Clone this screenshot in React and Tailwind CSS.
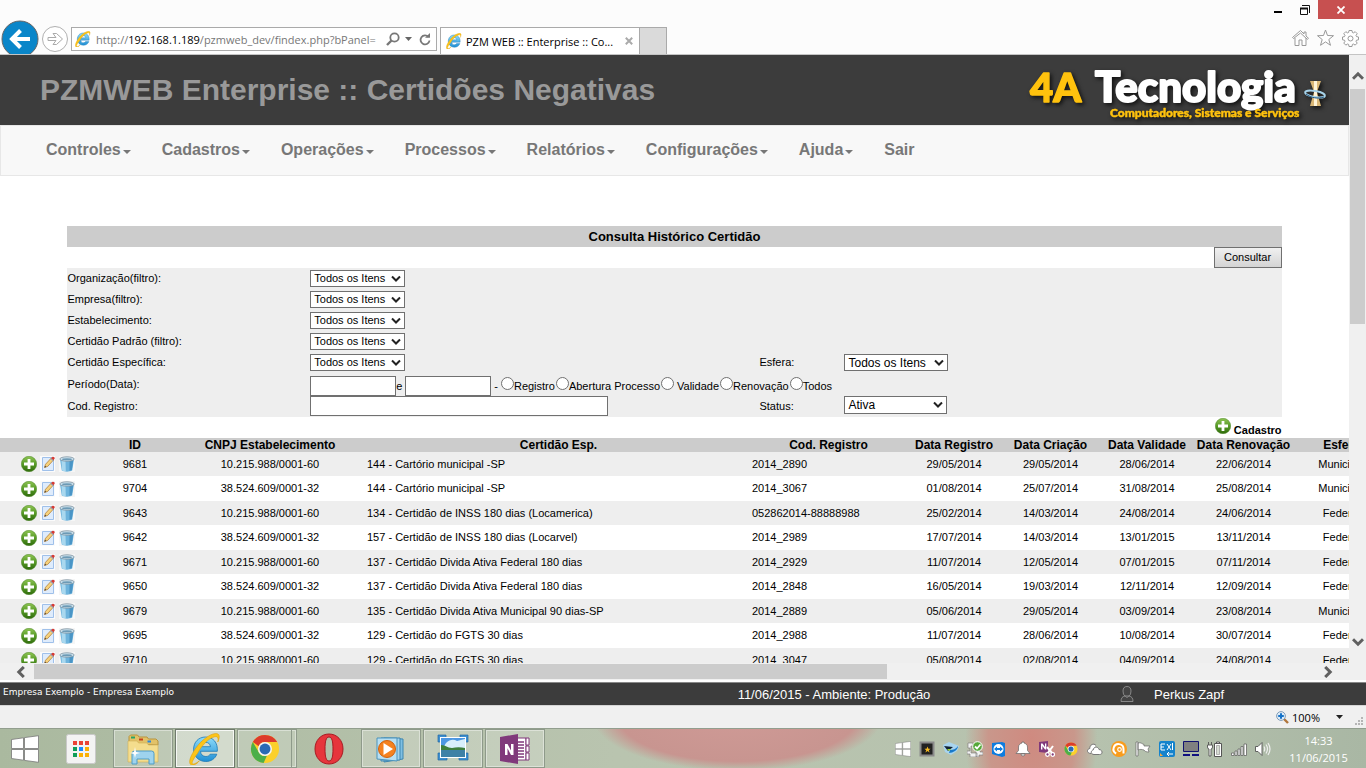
import { useState } from "react";

const filters = [
  { id: "organizacao", label: "Organização(filtro):" },
  { id: "empresa", label: "Empresa(filtro):" },
  { id: "estabelecimento", label: "Estabelecimento:" },
  { id: "certidao-padrao", label: "Certidão Padrão (filtro):" },
];

const periodOptions = ["Registro", "Abertura Processo", "Validade", "Renovação", "Todos"];

const menuItems = [
  "Controles",
  "Cadastros",
  "Operações",
  "Processos",
  "Relatórios",
  "Configurações",
  "Ajuda",
];

const rows = [
  ["9681", "10.215.988/0001-60", "144 - Cartório municipal -SP", "2014_2890", "29/05/2014", "29/05/2014", "28/06/2014", "22/06/2014", "Municipal"],
  ["9704", "38.524.609/0001-32", "144 - Cartório municipal -SP", "2014_3067", "01/08/2014", "25/07/2014", "31/08/2014", "25/08/2014", "Municipal"],
  ["9643", "10.215.988/0001-60", "134 - Certidão de INSS 180 dias (Locamerica)", "052862014-88888988", "25/02/2014", "14/03/2014", "24/08/2014", "24/06/2014", "Federal"],
  ["9642", "38.524.609/0001-32", "157 - Certidão de INSS 180 dias (Locarvel)", "2014_2989", "17/07/2014", "14/03/2014", "13/01/2015", "13/11/2014", "Federal"],
  ["9671", "10.215.988/0001-60", "137 - Certidão Divida Ativa Federal 180 dias", "2014_2929", "11/07/2014", "12/05/2014", "07/01/2015", "07/11/2014", "Federal"],
  ["9650", "38.524.609/0001-32", "137 - Certidão Divida Ativa Federal 180 dias", "2014_2848", "16/05/2014", "19/03/2014", "12/11/2014", "12/09/2014", "Federal"],
  ["9679", "10.215.988/0001-60", "135 - Certidão Divida Ativa Municipal 90 dias-SP", "2014_2889", "05/06/2014", "29/05/2014", "03/09/2014", "23/08/2014", "Municipal"],
  ["9695", "38.524.609/0001-32", "129 - Certidão do FGTS 30 dias", "2014_2988", "11/07/2014", "28/06/2014", "10/08/2014", "30/07/2014", "Federal"],
  ["9710", "10.215.988/0001-60", "129 - Certidão do FGTS 30 dias", "2014_3047", "05/08/2014", "02/08/2014", "04/09/2014", "24/08/2014", "Federal"],
];

const IeIcon = ({ className }) => (
  <svg viewBox="0 0 32 32" className={className}>
    <defs>
      <linearGradient id="ie-blue" x1="0" y1="0" x2="0" y2="1">
        <stop offset="0" stopColor="#8fdcfa" />
        <stop offset="1" stopColor="#1f8fd4" />
      </linearGradient>
    </defs>
    <path
      d="M16.5 4C9.6 4 4.6 9.200 4.600 16.200S9.600 28.500 16.800 28.500c5.300 0 9.300-2.700 11-7.300h-6.600c-.9 1.500-2.300 2.300-4.300 2.300-3.200 0-5.200-2-5.400-5.200h16.800C29 10 24.400 4 16.500 4zm-4.900 9.700c.5-2.800 2.300-4.400 5-4.400s4.500 1.600 4.900 4.400z"
      fill="url(#ie-blue)"
      stroke="#1a78b8"
      strokeWidth=".8"
    />
    <path
      d="M8.500 20.500C3.500 27 1.800 31.200 4.200 31c1.800-.1 4-1.500 6.200-3.200-3 4-7 5.200-8.800 3.700C-1 29 2 22 6.500 15.500 12.500 7 21 .8 26.500.5c4.500-.2 4.600 3.500 2.300 8.500.8-4.300-.3-5.800-3-5.200C19.500 5 12.500 13 8.500 20.500z"
      fill="#fcc419"
      stroke="#d99a06"
      strokeWidth=".5"
    />
  </svg>
);

const ChromeIcon = ({ className }) => (
  <svg viewBox="0 0 32 32" className={className}>
    <circle cx="16" cy="16" r="15" fill="#fbd02b" />
    <path d="M3 8.500A15 15 0 0 1 29 8.500H16a7.500 7.500 0 0 0-6.800 4.500z" fill="#dd3b2c" />
    <path d="M3 8.500 9.500 19.700A7.500 7.500 0 0 0 18 23.200L14.500 31A15 15 0 0 1 3 8.500z" fill="#4caf4a" />
    <circle cx="16" cy="16" r="7.500" fill="#f4f4f4" />
    <circle cx="16" cy="16" r="5.800" fill="#2a6ab5" />
  </svg>
);

const PlusIcon = () => (
  <svg viewBox="0 0 16 16" className="size-4">
    <defs>
      <linearGradient id="plus-green" x1="0" y1="0" x2="0" y2="1">
        <stop offset="0" stopColor="#8fc455" />
        <stop offset=".5" stopColor="#579b26" />
        <stop offset="1" stopColor="#2f6b0c" />
      </linearGradient>
    </defs>
    <circle cx="8" cy="8" r="7.700" fill="url(#plus-green)" stroke="#4a8424" strokeWidth=".5" />
    <path d="M6.600 3h2.800v3.600H13v2.800H9.400V13H6.600V9.400H3V6.600h3.600z" fill="#fff" />
  </svg>
);

const EditIcon = () => (
  <svg viewBox="0 0 16 16" className="size-4">
    <path d="M0 0h15v16H0z" fill="#fbfbfb" />
    <path d="M2.500 1.500h11v13h-11z" fill="#dfecfc" stroke="#9fc0ea" />
    <path d="m4.500 11.500 1-3.200L11.300 2l2.200 2-5.800 6.400z" fill="#f7d27c" stroke="#a9762f" strokeWidth=".7" />
    <path d="m4.500 11.500.5-1.700 1.200 1.100z" fill="#333" />
    <path d="m11 2.300 1.300-1.400c1.400-.6 2.700.5 2.300 1.900l-1.300 1.500z" fill="#d63a34" />
    <path d="m10.300 3 .7-.7 2.300 2-.7.800z" fill="#8fa4c8" />
  </svg>
);

const TrashIcon = () => (
  <svg viewBox="0 0 16 16" className="size-4">
    <path d="M0 0h16v16H0z" fill="#f6f6f6" />
    <path d="M1 3h14l-1.800 11.500c-2.200 1.500-8.200 1.500-10.400 0z" fill="#6db3dc" />
    <path d="M2.500 5h4l.3 10c-1.600 0-2.900-.2-3.700-.6z" fill="#a9d8ef" />
    <path d="m10.500 5 3.700-.5-1.400 9.600-2.400.7z" fill="#4a95c6" />
    <ellipse cx="8" cy="3" rx="7.200" ry="2.200" fill="#cfe4f0" stroke="#7d929f" strokeWidth=".8" />
    <ellipse cx="8" cy="3.300" rx="5" ry="1" fill="#6d9ab5" />
  </svg>
);

const ArrowHead = ({ className }) => (
  <svg viewBox="0 0 12 12" className={className}>
    <path d="m1 8.800 5-5 5 5" fill="none" stroke="#606060" strokeWidth="3" />
  </svg>
);

const SelectBox = ({ id, options, className }) => (
  <div className={`relative ${className}`}>
    <select
      id={id}
      className="block size-full appearance-none border border-[#707070] bg-white pl-[3px] leading-none text-black"
    >
      {options.map((option) => (
        <option key={option}>{option}</option>
      ))}
    </select>
    <svg viewBox="0 0 10 7" className="pointer-events-none absolute top-1/2 right-1 h-[7px] w-[10px] -translate-y-1/2">
      <path d="m1 1 4 4 4-4" fill="none" stroke="#222" strokeWidth="2" />
    </svg>
  </div>
);

const BrowserBar = () => (
  <header className="flex h-[55px] shrink-0 flex-col border-b border-[#c4c4c4] bg-[#fcfcfc] font-['Open_Sans','Noto_Sans',sans-serif] text-[11px]">
    <div className="flex h-[19px] shrink-0 justify-end pr-[3px]">
      <button aria-label="Minimizar" className="flex w-7 items-end justify-center pb-[6px]">
        <span className="h-[2px] w-2 bg-black" />
      </button>
      <button aria-label="Restaurar" className="flex w-[26px] items-center justify-center">
        <svg viewBox="0 0 10 10" className="size-[10px]">
          <path d="M2 .5h7.500V8" fill="none" stroke="#111" />
          <path d="M.5 3.500h7v6h-7z" fill="none" stroke="#111" />
          <path d="M0 2.500h8v2H0z" fill="#111" />
        </svg>
      </button>
      <button aria-label="Fechar" className="flex w-[45px] items-center justify-center bg-[#c75050]">
        <svg viewBox="0 0 8 8" className="size-2">
          <path d="m.5.5 7 7m0-7-7 7" stroke="#fff" strokeWidth="1.800" />
        </svg>
      </button>
    </div>
    <div className="flex min-h-0 flex-1 overflow-hidden">
      <button aria-label="Voltar" className="ml-px size-[38px] shrink-0">
        <svg viewBox="0 0 38 38" className="size-full">
          <circle cx="19" cy="20" r="18" fill="#0a86c9" stroke="#666" />
          <path d="M29 20H12m7.500-8.500L11 20l8.500 8.500" fill="none" stroke="#fff" strokeWidth="4" />
        </svg>
      </button>
      <button aria-label="Avançar" className="ml-[3px] h-[38px] w-[27px] shrink-0">
        <svg viewBox="0 0 27 38" className="size-full">
          <circle cx="13" cy="20" r="12.500" fill="#fff" stroke="#b0b0b0" />
          <path d="M6 18.500h8l-3-4h3.500l6 5.500-6 5.500H11l3-4H6z" fill="#fff" stroke="#aaa" />
        </svg>
      </button>
      <div className="mt-2 ml-[2px] flex h-6 w-[366px] shrink-0 items-center border border-[#aaa] bg-white pl-[3px]">
        <IeIcon className="size-4 shrink-0" />
        <div className="ml-[5px] w-[289px] whitespace-nowrap text-[#777]">
          http://<span className="text-black">192.168.1.189</span>/pzmweb_dev/findex.php?bPanel=
        </div>
        <button aria-label="Pesquisar" className="ml-px">
          <svg viewBox="0 0 14 14" className="size-[14px]">
            <circle cx="8.500" cy="5.500" r="4.200" fill="none" stroke="#777" strokeWidth="1.800" />
            <path d="m5.500 8.500-4.500 4.500" stroke="#777" strokeWidth="2.400" />
          </svg>
        </button>
        <svg viewBox="0 0 7 4" className="ml-[5px] h-1 w-[7px]">
          <path d="M0 0h7L3.500 4z" fill="#666" />
        </svg>
        <button aria-label="Atualizar" className="ml-[7px]">
          <svg viewBox="0 0 12 13" className="h-[13px] w-3">
            <path d="M9.500 4A4.500 4.500 0 1 0 10.500 7.500" fill="none" stroke="#777" strokeWidth="1.800" />
            <path d="M6 4.800h5V0z" fill="#777" />
          </svg>
        </button>
      </div>
      <div className="mt-2 ml-[3px] flex w-[200px] shrink-0 items-center border border-b-0 border-[#aaa] bg-white pl-[5px]">
        <IeIcon className="size-4 shrink-0" />
        <span className="ml-1 whitespace-nowrap text-black">PZM WEB :: Enterprise :: Co...</span>
        <button aria-label="Fechar guia" className="mr-[6px] ml-auto">
          <svg viewBox="0 0 8 8" className="size-2">
            <path d="m.8.8 6.400 6.400m0-6.400L.8 7.200" stroke="#aaa" strokeWidth="2" />
          </svg>
        </button>
      </div>
      <button aria-label="Nova guia" className="mt-2 w-[27px] shrink-0 border border-b-0 border-l-0 border-[#aaa] bg-[#dadada]" />
      <div className="mt-[10px] mr-[7px] ml-auto flex gap-2">
        <svg viewBox="0 0 17 18" className="h-[18px] w-[17px]" fill="#fff" stroke="#999">
          <path d="M3 9v7.500h4V11h3v5.500h4V9m-12.500.5-1-1L8.500 1.500 12 5V3h2v4l2.500 2.300-1.200 1L8.500 4z" />
        </svg>
        <svg viewBox="0 0 17 18" className="h-[18px] w-[17px]" fill="#fff" stroke="#999">
          <path d="m8.500 1 2 5.500 6 .2-4.700 3.800 1.700 5.800-5-3.400-5 3.400 1.700-5.800L.5 6.700l6-.2z" />
        </svg>
        <svg viewBox="0 0 17 18" className="h-[18px] w-[17px]" fill="#fff" stroke="#999">
          <path d="M7 1.500h3l.4 2 1 .4 1.800-1.200 2 2-1.200 1.800.5 1.100 2 .4v2.800l-2 .4-.5 1.100 1.200 1.800-2 2-1.800-1.100-1 .4-.4 2.100H7l-.4-2.100-1-.4-1.800 1.100-2-2L3 12.300l-.5-1.100-2-.4V8l2-.4L3 6.500 1.800 4.700l2-2 1.800 1.200 1-.4z" />
          <circle cx="8.500" cy="9.500" r="2.500" />
        </svg>
      </div>
    </div>
  </header>
);

const Logo = () => (
  <svg viewBox="0 0 310 62" className="h-[62px] w-[310px] font-['Lato',sans-serif] font-black drop-shadow-[2px_2px_2px_#111]">
    <g strokeLinejoin="round">
      <text x="6" y="43" fontSize="40" fill="#ffc20e" stroke="#ffc20e" strokeWidth="1.500">4A</text>
      <text x="71" y="43" fontSize="42" fill="#fff" stroke="#fff" strokeWidth="2">Tecnologia</text>
      <text x="86" y="58" fontSize="12" fill="#ffc20e" stroke="#ffc20e" strokeWidth=".5">Computadores, Sistemas e Serviços</text>
    </g>
    <path d="M286 22h11l-4 11 4 14h-11l4-14z" fill="#d9b676" />
    <path d="M290 22h3v25h-3z" fill="#fff3d6" />
    <ellipse cx="291" cy="35" rx="10" ry="3" fill="none" stroke="#a7d3ea" strokeWidth="2" transform="rotate(10 291 35)" />
    <path d="M282 35c5 4 12 5 18 3" fill="none" stroke="#24567c" />
  </svg>
);

const Nav = () => (
  <nav className="flex h-[51px] items-center gap-[31px] border border-[#e7e7e7] bg-[#f8f8f8] pb-px pl-[45px] text-base font-bold text-[#777]">
    {menuItems.map((item) => (
      <a key={item} href="#" className="flex items-center gap-[2px]">
        {item}
        <svg viewBox="0 0 8 4" className="mt-1 h-1 w-2">
          <path d="M0 0h8L4 4z" fill="#777" />
        </svg>
      </a>
    ))}
    <a href="#">Sair</a>
  </nav>
);

const SearchForm = () => {
  const [period, setPeriod] = useState("");

  return (
    <form className="mx-auto w-[90%]" onSubmit={(e) => e.preventDefault()}>
      <h2 className="bg-[#ccc] text-center text-[13px] leading-[21px] font-bold">Consulta Histórico Certidão</h2>
      <div className="flex h-[21px] justify-end">
        <button className="w-[68px] border border-[#707070] bg-linear-to-b from-[#f0f0f0] to-[#d4d4d4]">Consultar</button>
      </div>
      <div className="bg-[#eee]">
        {filters.map(({ id, label }) => (
          <div key={id} className="grid h-[21px] grid-cols-[20%_1fr] items-center">
            <label htmlFor={id}>{label}</label>
            <SelectBox id={id} options={["Todos os Itens"]} className="h-[17px] w-[95px]" />
          </div>
        ))}
        <div className="grid h-[21px] grid-cols-[20%_37%_7%_1fr] items-center">
          <label htmlFor="especifica">Certidão Específica:</label>
          <SelectBox id="especifica" options={["Todos os Itens"]} className="h-[17px] w-[95px]" />
          <label htmlFor="esfera">Esfera:</label>
          <SelectBox id="esfera" options={["Todos os Itens"]} className="h-[17px] w-[104px] text-xs" />
        </div>
        <div className="grid h-[23px] grid-cols-[20%_1fr]">
          <label htmlFor="data-de" className="self-center">Período(Data):</label>
          <div className="flex items-end">
            <input id="data-de" type="text" className="h-5 w-[86px] border border-[#707070] bg-white" />
            <label htmlFor="data-ate" className="w-[9px] pb-[3px]">e</label>
            <input id="data-ate" type="text" className="h-5 w-[86px] border border-[#707070] bg-white" />
            <span className="mx-[3px] pb-[3px]">-</span>
            <div className="flex gap-px">
              {periodOptions.map((option) => (
                <label key={option} className="flex pb-1">
                  <input
                    type="radio"
                    name="periodo"
                    checked={period === option}
                    onChange={() => setPeriod(option)}
                    className="size-[13px] appearance-none rounded-full border border-[#707070] bg-white checked:border-4"
                  />
                  <span className={option === "Validade" ? "pt-[3px] pl-[3px] leading-3" : "pt-[3px] leading-3"}>{option}</span>
                </label>
              ))}
            </div>
          </div>
        </div>
        <div className="grid h-[21px] grid-cols-[20%_37%_7%_1fr]">
          <label htmlFor="cod-registro" className="self-center">Cod. Registro:</label>
          <input id="cod-registro" type="text" className="h-5 w-[298px] border border-[#707070] bg-white" />
          <label htmlFor="status" className="self-center">Status:</label>
          <SelectBox id="status" options={["Ativa"]} className="h-[18px] w-[103px] self-start text-xs" />
        </div>
      </div>
      <a href="#" className="flex h-[21px] items-start justify-end gap-[3px] pt-px font-bold">
        <PlusIcon />
        <span className="pt-[6px] leading-3">Cadastro</span>
      </a>
    </form>
  );
};

const ResultTable = () => (
  <table className="w-[1391px] table-fixed border-collapse text-center">
    <thead>
      <tr className="h-[14px] bg-[#ccc] text-xs leading-[14px]">
        <th className="w-24" />
        <th className="w-[78px]">ID</th>
        <th className="w-48">CNPJ Estabelecimento</th>
        <th className="w-[385px]">Certidão Esp.</th>
        <th className="w-[155px]">Cod. Registro</th>
        <th className="w-24">Data Registro</th>
        <th className="w-[97px]">Data Criação</th>
        <th className="w-24">Data Validade</th>
        <th className="w-[97px]">Data Renovação</th>
        <th>Esfera</th>
      </tr>
    </thead>
    <tbody>
      {rows.map((row) => (
        <tr key={row[0]} className="h-6 odd:bg-[#eee] even:h-[25px]">
          <td>
            <div className="flex gap-[3px] pl-[21px]">
              <button aria-label="Adicionar"><PlusIcon /></button>
              <button aria-label="Editar"><EditIcon /></button>
              <button aria-label="Excluir"><TrashIcon /></button>
            </div>
          </td>
          {row.map((cell, i) => (
            <td key={i} className={i === 2 || i === 3 ? "pl-px text-left" : ""}>{cell}</td>
          ))}
        </tr>
      ))}
    </tbody>
  </table>
);

const taskApps = [
  {
    name: "Explorador de Arquivos",
    box: "border border-[#8e9a8a] bg-white/20 inset-ring inset-ring-white/40",
    icon: (
      <svg viewBox="0 0 32 32" className="size-8">
        <path d="M2 11V3.500L3.500 2h7L12 4h8l1.500 2H29l2 2v4z" fill="#e2c268" stroke="#b8943c" />
        <path d="M4 3.500h4v2H4z" fill="#26a269" />
        <path d="M12 5.500h4v2h-4z" fill="#c7401c" />
        <path d="M20.500 7.500H24v2h-3.500z" fill="#2c88d9" />
        <path d="M1 8h9l1.500 2H20l1.500 2H31v17H1z" fill="#f4dd8d" stroke="#d0ae55" strokeWidth=".6" />
        <path d="M5 31V20.500q0-2.500 2.500-2.500h17q2.500 0 2.500 2.500V31h-5v-5H10v5z" fill="#9ed3ee" stroke="#4f9cc6" />
        <path d="m8 14 1 5 4 1-4 1-1 4-1-4-4-1 4-1z" fill="#fff" />
      </svg>
    ),
  },
  {
    name: "Internet Explorer",
    box: "border border-[#6f7a6c] bg-white/45 inset-ring inset-ring-white/80",
    icon: <IeIcon className="size-8" />,
  },
  {
    name: "Google Chrome",
    box: "border border-[#8e9a8a] bg-white/20 inset-ring inset-ring-white/40",
    icon: (
      <span className="mr-1 flex h-full w-[54px] items-center justify-center border-r border-[#8e9a8a]">
        <ChromeIcon className="size-[30px]" />
      </span>
    ),
  },
  {
    name: "Opera",
    box: "",
    icon: (
      <svg viewBox="0 0 30 32" className="h-8 w-[30px]">
        <path d="M15 1C7 1 1 7.300 1 16s6 15 14 15 14-6.300 14-15S23 1 15 1zm0 3c3 0 4 4.500 4 12s-1 12-4 12-4-4.500-4-12 1-12 4-12z" fill="#e6353c" fillRule="evenodd" stroke="#a81a22" />
      </svg>
    ),
  },
  {
    name: "Media Player",
    box: "border border-[#8e9a8a] bg-white/20 inset-ring inset-ring-white/40",
    icon: (
      <svg viewBox="0 0 32 32" className="size-8">
        <path d="m9 5 19 1v20l-19 3z" fill="#7fbfe2" stroke="#3d85b0" />
        <path d="M6 5h19v22L6 28z" fill="#a5d4ec" stroke="#3d85b0" />
        <path d="M2 5h20v23L2 26z" fill="#b8dff2" stroke="#4b94bd" />
        <circle cx="12" cy="16" r="8.500" fill="#f58220" stroke="#d1620c" />
        <path d="M8.500 10v12l9.500-6z" fill="#fff" />
      </svg>
    ),
  },
  {
    name: "Fotos",
    box: "border border-[#8e9a8a] bg-white/20 inset-ring inset-ring-white/40",
    icon: (
      <svg viewBox="0 0 32 32" className="size-8">
        <path d="M1 2h8v6H7v13h3v6H1v-7h3V9H1zM23 2h8v7h-3v11h3v7h-9v-6h3V8h-2z" fill="#3d8fd0" stroke="#2469a3" strokeWidth=".7" />
        <path d="M3 4h26v21H3z" fill="#fff" />
        <path d="M4 5h24v10H4z" fill="#4d97e2" />
        <path d="M9 10c4-4 8-4 11-2l8-2v9H6z" fill="#d9effb" />
        <path d="M4 12c5 0 6 3 11 3 4-1 9-1 13 0v3H4z" fill="#3f7f3d" />
        <path d="M4 17h24v7H4z" fill="#3e81a6" />
      </svg>
    ),
  },
  {
    name: "OneNote",
    box: "border border-[#8e9a8a] bg-white/20 inset-ring inset-ring-white/40",
    icon: (
      <svg viewBox="0 0 32 32" className="size-8">
        <path d="M17 5h10v22H17z" fill="#fff" stroke="#80397b" />
        <path d="M18 9h7m-7 3h7m-7 3h7m-7 3h7m-7 3h7m-7 3h7" stroke="#80397b" strokeWidth="1.300" />
        <path d="M27 5h3v7h-3zm0 8h3v6h-3zm0 7h3v7h-3z" fill="#fff" stroke="#80397b" />
        <path d="m1 4 18-3v30L1 28z" fill="#80397b" />
        <path d="M6 22V11h2.500l3.500 6.500V11h2.500v11H12l-3.500-6.700V22z" fill="#fff" />
      </svg>
    ),
  },
];

const WindowsIcon = ({ className }) => (
  <svg viewBox="0 0 28 28" className={className}>
    <path d="m.5 4.500 12-1.700v10.700H.5zm13-1.900L27.500.7v12.800h-14zM.5 14.500h12v10.700L.5 23.500zm13 0h14v12.800l-14-1.900z" fill="#fff" stroke="#777" strokeWidth=".8" />
  </svg>
);

const trayIcons = [
  <WindowsIcon className="size-4" />,
  <svg viewBox="0 0 16 16" className="size-4">
    <path d="M1.500 1.500h13v13h-13z" fill="#222" stroke="#8a8a8a" strokeWidth="2" />
    <path d="m8.500 5.500.9 2.200h2.100l-1.700 1.500.8 2.300-2.100-1.400-2.100 1.400.8-2.300-1.700-1.500h2.100z" fill="#f5b921" />
  </svg>,
  <svg viewBox="0 0 16 16" className="size-4">
    <path d="m0 4 6-3 10 4-2 5-6 4-6-3z" fill="#a8d4ef" />
    <path d="m1 5 9 1-5 4z" fill="#123" />
    <path d="M6 12c4 0 9-3 9-7-2 3-5 4-8 4z" fill="#1879c9" />
    <path d="m4 8 4 0-2 2z" fill="#9bd62b" />
  </svg>,
  <svg viewBox="0 0 16 16" className="size-4">
    <path d="M1 2h5v3H4v7h6v4H3v-3H0v-3h3V7H1zM9 9h4v2h3v3h-4v2H9z" fill="#f2f2f2" stroke="#777" strokeWidth=".6" />
    <circle cx="10.500" cy="5.500" r="4.800" fill="#55a83a" stroke="#fff" />
    <path d="m8 5.500 2 2 3.500-4" fill="none" stroke="#fff" strokeWidth="1.800" />
  </svg>,
  <svg viewBox="0 0 16 16" className="size-4">
    <path d="m1 2 10-1 3 1v13l-3 1-10-3z" fill="#0d7ce0" />
    <circle cx="7.500" cy="8" r="5" fill="#fff" />
    <path d="m3 8 3-2.500v1.600h3V5.500L12 8l-3 2.500V8.900H6v1.600z" fill="#0d7ce0" />
  </svg>,
  <svg viewBox="0 0 16 16" className="size-4">
    <path d="M1 12.500h14L12.500 9.500V6C12.500 3.500 10.500 2.500 9 2V1H7v1C5.500 2.500 3.500 3.500 3.500 6v3.500zM6 13h4q0 2-2 2t-2-2z" fill="#fff" stroke="#666" strokeWidth=".7" />
  </svg>,
  <svg viewBox="0 0 16 16" className="size-4">
    <path d="m0 1 9-1v12l-9-1z" fill="#80397b" />
    <path d="M2 8.500v-6h1.500L6 6V2.500h1.300v6H6L3.400 5v3.500z" fill="#fff" />
    <path d="m8 6 6 7m0-8-6 8" stroke="#fff" strokeWidth="2" />
    <circle cx="8.500" cy="13.500" r="1.800" fill="#80397b" stroke="#fff" strokeWidth="1.300" />
    <circle cx="13.700" cy="13.500" r="1.800" fill="#80397b" stroke="#fff" strokeWidth="1.300" />
  </svg>,
  <ChromeIcon className="size-[14px]" />,
  <svg viewBox="0 0 16 16" className="size-4">
    <path d="M4 12.500C-.5 12.500-.5 8 2.800 7.500 2.500 4 6.500 1.500 9 4.500" fill="#fff" stroke="#777" />
    <path d="M7 13.500c-3.500 0-3.500-4-.8-4.500C6.500 5.500 11 5 12 8.500c3.500 0 4.500 5 .5 5z" fill="#fff" stroke="#777" />
  </svg>,
  <svg viewBox="0 0 16 16" className="size-4">
    <circle cx="8" cy="8" r="8" fill="#f99c1c" />
    <path d="M5.200 12.500A5 5 0 1 1 12.500 8v4.500" fill="none" stroke="#fff" strokeWidth="2" />
    <circle cx="8.500" cy="8.500" r="1.800" fill="#f99c1c" stroke="#fff" strokeWidth="1.200" />
  </svg>,
  <svg viewBox="0 0 16 16" className="size-4">
    <path d="M1 1h2v14H1zM3 2c3-1 4 1 6 1.500V5l6 0-2 3 1 3c-3 0-4-.5-5-2-2-.6-4-1-6 0z" fill="#fff" stroke="#666" strokeWidth=".7" />
  </svg>,
  <svg viewBox="0 0 16 16" className="size-4">
    <rect x="0" y="0" width="16" height="16" rx="2" fill="#1583cc" />
    <path d="M2 3h4M2 6h3M2 9h4M2 3v6m6-6 4 6m0-6L8 9m5.500-7v7M8 13h6M10 11l-2 2 2 2" fill="none" stroke="#fff" />
    <path d="M1 15v-3l3 3z" fill="#f4a742" />
  </svg>,
  <svg viewBox="0 0 16 16" className="size-4">
    <path d="M.5.5h15v10H.5z" fill="#808080" stroke="#111170" />
    <path d="M0 13h7v2H0zM9 13h7v2H9z" fill="#111180" />
  </svg>,
  <svg viewBox="0 0 16 16" className="size-4">
    <path d="M7.500 2.500h7v13h-7zM9.500 1h3v1.500h-3z" fill="#fff" stroke="#555" />
    <path d="M9.500 4.500h3v9h-3z" fill="#d6dcd2" stroke="#888" strokeWidth=".6" />
    <path d="M1.500 1v3M4.500 1v3M.5 4h5v2q0 2-1.500 2v7H2V8Q.5 8 .5 6z" fill="#fff" stroke="#555" strokeWidth=".9" />
  </svg>,
  <svg viewBox="0 0 16 16" className="size-4">
    <path d="M.5 12v2.500H3V12zM4 10v4.500h2V10zM7 8v6.500h2V8zM10 5.500v9h2v-9zM13 3v11.500h2.500V3z" fill="#fff" stroke="#666" strokeWidth=".8" />
  </svg>,
  <svg viewBox="0 0 16 16" className="size-4">
    <path d="M.5 5.500H3L7 1.500v13l-4-4H.5z" fill="#fff" stroke="#555" strokeWidth=".9" />
    <path d="M9 5.500q1.500 2.500 0 5M11 3.500q3 4.500 0 9M13 2q4 6 0 12" fill="none" stroke="#eee" strokeWidth="1.200" />
  </svg>,
];

const Taskbar = () => (
  <footer className="flex h-10 shrink-0 items-stretch border-t border-[#929e8e] bg-[radial-gradient(ellipse_145px_54px_at_54%_-12px,#cf9a96_0%,#c89590_82%,transparent_100%),radial-gradient(ellipse_66px_110px_at_75.5%_10px,#cf8a80_0%,#c9978b_65%,transparent_100%),linear-gradient(90deg,#aab99f,#b9c4af_45%,#b6c2ae_80%,#a9b7a4)] font-['Open_Sans','Noto_Sans',sans-serif] text-[11px] text-white">
    <button aria-label="Iniciar" className="ml-[11px] flex w-7 items-center">
      <WindowsIcon className="size-7" />
    </button>
    <button aria-label="Aplicativos" className="mx-[27px] flex items-center">
      <svg viewBox="0 0 30 30" className="size-[30px]">
        <rect x=".5" y=".5" width="29" height="29" rx="2" fill="#f3f3f3" stroke="#c9c9c9" />
        <path d="M7 7h4v4H7zm6 0h4v4h-4zm6 0h4v4h-4z" fill="#ea4335" />
        <path d="M7 13h4v4H7zm0 6h4v4H7z" fill="#0f9d58" />
        <path d="M13 13h4v4h-4z" fill="#1a8cff" />
        <path d="M19 13h4v4h-4zm-6 6h4v4h-4zm6 0h4v4h-4z" fill="#fbb003" />
      </svg>
    </button>
    <div className="-ml-[10px] flex gap-[2px]">
      {taskApps.map(({ name, box, icon }) => (
        <button key={name} aria-label={name} className={`flex w-[60px] items-center justify-center ${box}`}>
          {icon}
        </button>
      ))}
    </div>
    <div className="ml-auto flex items-center gap-2">
      {trayIcons.map((icon, i) => (
        <span key={i} className="flex size-4 items-center justify-center">{icon}</span>
      ))}
    </div>
    <div className="flex w-[95px] flex-col justify-center text-center leading-[17px]">
      <span>14:33</span>
      <span>11/06/2015</span>
    </div>
  </footer>
);

const App = () => {
  return (
    <div className="flex h-screen flex-col overflow-hidden bg-white font-['Liberation_Sans',Arial,sans-serif] text-[11px] leading-[13px] text-black">
      <BrowserBar />

      <div className="flex min-h-0 flex-1">
        <div className="flex min-w-0 flex-1 flex-col">
          <main className="min-h-0 flex-1 overflow-hidden">
            <div className="flex h-[70px] items-center justify-between bg-[#3c3c3c] pr-[15px] pl-10">
              <h1 className="text-[30px] leading-9 font-bold text-[#999]">PZMWEB Enterprise :: Certidões Negativas</h1>
              <Logo />
            </div>
            <Nav />
            <div className="pt-[50px]">
              <SearchForm />
              <ResultTable />
            </div>
          </main>
          {/* Horizontal scrollbar */}
          <div className="flex h-[17px] shrink-0 items-center bg-[#f0f0f0] px-[13px]">
            <ArrowHead className="mx-[2px] size-3 -rotate-90" />
            <div className="ml-[5px] h-[15px] w-[853px] bg-[#ccc]" />
            <ArrowHead className="mr-[2px] ml-auto size-3 rotate-90" />
          </div>
        </div>
        {/* Vertical scrollbar */}
        <div className="flex w-[17px] shrink-0 flex-col items-center bg-[#f0f0f0] pt-[13px] pb-[30px]">
          <ArrowHead className="my-[2px] size-3" />
          <div className="mt-[5px] h-[235px] w-[15px] bg-[#ccc]" />
          <ArrowHead className="mt-auto mb-[2px] size-3 rotate-180" />
        </div>
      </div>

      <div className="mt-[2px] flex h-[23px] shrink-0 items-center border-t border-[#888] bg-[#3c3c3c] text-[13px] text-white">
        <span className="w-[54%] shrink-0 pb-1 pl-[3px] font-['DejaVu_Sans',sans-serif] text-[9px]">Empresa Exemplo - Empresa Exemplo</span>
        <span className="w-[28%] shrink-0">11/06/2015 - Ambiente: Produção</span>
        <svg viewBox="0 0 14 16" className="h-4 w-[14px]" fill="#444" stroke="#999" strokeWidth=".8">
          <path d="M3 5q0-4.500 4-4.500T11 5q0 4-2 5H5Q3 9 3 5z" />
          <path d="M1 15.500q0-5 4-5.500l2 1.500L9 10q4 .5 4 5.500z" />
        </svg>
        <span className="ml-5">Perkus Zapf</span>
      </div>

      <div className="flex h-[23px] shrink-0 items-center justify-end border-t border-[#d5d5d5] bg-[#f0f0f0] font-['Open_Sans','Noto_Sans',sans-serif] text-[11px]">
        <svg viewBox="0 0 13 13" className="size-[13px]">
          <path d="m8 8 4 4" stroke="#b0763c" strokeWidth="2.400" />
          <circle cx="5" cy="5" r="4.400" fill="#dcebf8" stroke="#7f9cb8" />
          <path d="M5 2.200v5.600M2.200 5h5.600" stroke="#1673c8" strokeWidth="2" />
        </svg>
        <span className="ml-[3px]">100%</span>
        <svg viewBox="0 0 7 4" className="ml-4 h-1 w-[7px]">
          <path d="M0 0h7L3.500 4z" fill="#222" />
        </svg>
        <svg viewBox="0 0 9 9" className="mt-auto mr-[2px] mb-[2px] ml-3 size-[9px]" fill="#b5b5b5">
          <path d="M6 0h2v2H6zM3 3h2v2H3zm3 0h2v2H6zM0 6h2v2H0zm3 0h2v2H3zm3 0h2v2H6z" />
        </svg>
      </div>

      <Taskbar />
    </div>
  );
};

export default App;
